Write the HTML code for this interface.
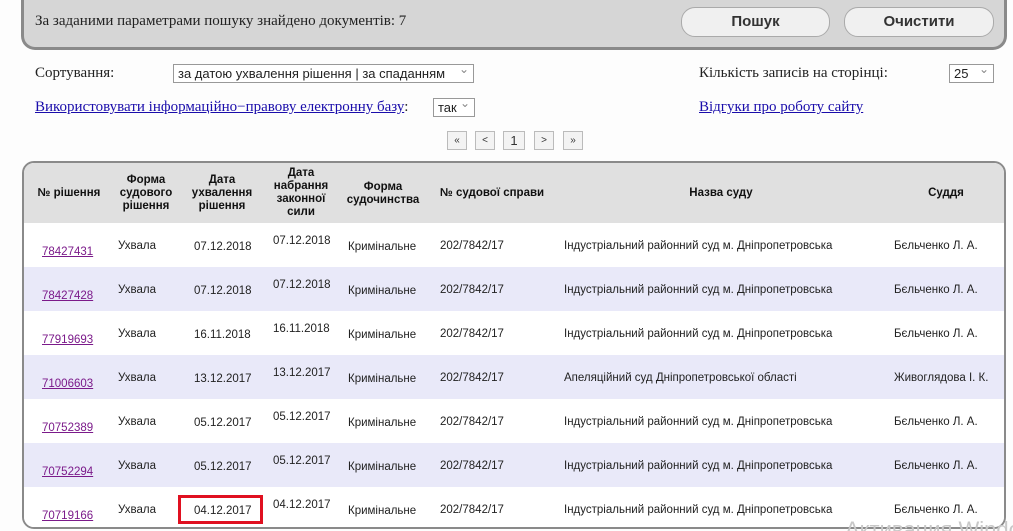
<!DOCTYPE html>
<html><head><meta charset="utf-8"><style>
html,body{margin:0;width:1013px;height:531px;overflow:hidden}
body{background:#fdfdfd;position:relative;font-family:"Liberation Serif",serif;}
.a{position:absolute;white-space:nowrap}
.top{position:absolute;left:21px;top:-10px;width:980px;height:57px;background:#d6d6d6;border:3px solid #8a8a8a;border-top:none;border-radius:0 0 14px 14px;}
.btn{position:absolute;top:7px;height:28px;border:1px solid #aaa;border-radius:14px;background:#f0f0f0;font:bold 15px "Liberation Sans",sans-serif;color:#333;text-align:center;line-height:28px}
.sel{position:absolute;border:1px solid #999;background:#fff;font:13px "Liberation Sans",sans-serif;color:#222;height:17px;line-height:17px;padding-left:4px;box-sizing:content-box}
.sel:after{content:"⌄";position:absolute;right:4px;top:-4px;color:#888;font-size:12px}
.lk{color:#1a0dab;text-decoration:underline}
.pg{position:absolute;top:131px;height:17px;border:1px solid #bbb;background:#f3f3f3;font:10px "Liberation Sans",sans-serif;text-align:center;line-height:17px;color:#333}
.tbl{position:absolute;left:22px;top:161px;width:980px;height:364px;border:2px solid #8a8a8a;border-radius:12px;overflow:hidden;background:#fff}
.row{position:absolute;left:0;width:980px;height:44px}
.t{position:absolute;font:11.5px "Liberation Sans","DejaVu Sans",sans-serif;color:#222;white-space:nowrap}
.h{font-weight:bold;text-align:center;line-height:13px;color:#111}
.lnk{color:#7b1a8a;text-decoration:underline}
</style></head><body>
<div class="top"></div>
<div class="a" style="left:35px;top:13px;font-size:15px;color:#222">За заданими параметрами пошуку знайдено документів: 7</div>
<div class="btn" style="left:681px;width:147px">Пошук</div>
<div class="btn" style="left:844px;width:148px">Очистити</div>

<div class="a" style="left:35px;top:65px;font-size:15px;color:#222">Сортування:</div>
<div class="sel" style="left:173px;top:64px;width:295px">за датою ухвалення рішення | за спаданням</div>
<div class="a" style="left:35px;top:99px;font-size:15px"><span class="lk">Використовувати інформаційно−правову електронну базу</span><span style="color:#222">:</span></div>
<div class="sel" style="left:433px;top:98px;width:36px">так</div>
<div class="a" style="left:699px;top:65px;font-size:15px;color:#222">Кількість записів на сторінці:</div>
<div class="sel" style="left:949px;top:64px;width:39px">25</div>
<div class="a lk" style="left:699px;top:99px;font-size:15px">Відгуки про роботу сайту</div>

<div class="pg" style="left:447px;width:18px">«</div>
<div class="pg" style="left:475px;width:18px">&lt;</div>
<div class="pg" style="left:503px;width:20px;font-size:13px">1</div>
<div class="pg" style="left:534px;width:18px">&gt;</div>
<div class="pg" style="left:563px;width:18px">»</div>

<div class="tbl">
<div class="row" style="top:0;height:60px;background:#e0e0e0"></div>
<div class="t h" style="left:2px;width:86px;top:24px">№ рішення</div>
<div class="t h" style="left:88px;width:68px;top:11px">Форма<br>судового<br>рішення</div>
<div class="t h" style="left:156px;width:84px;top:11px">Дата<br>ухвалення<br>рішення</div>
<div class="t h" style="left:240px;width:74px;top:4px">Дата<br>набрання<br>законної<br>сили</div>
<div class="t h" style="left:314px;width:90px;top:18px">Форма<br>судочинства</div>
<div class="t h" style="left:416px;top:24px">№ судової справи</div>
<div class="t h" style="left:542px;width:310px;top:24px">Назва суду</div>
<div class="t h" style="left:872px;width:100px;top:24px">Суддя</div>

<div class="row" style="top:60px;background:#fff"></div>
<div class="row" style="top:104px;background:#e9e9f9"></div>
<div class="row" style="top:148px;background:#fff"></div>
<div class="row" style="top:192px;background:#e9e9f9"></div>
<div class="row" style="top:236px;background:#fff"></div>
<div class="row" style="top:280px;background:#e9e9f9"></div>
<div class="row" style="top:324px;background:#fff"></div>
</div>

<div id="rows"></div>
<script>
var d=[["78427431","07.12.2018","07.12.2018","Індустріальний районний суд м. Дніпропетровська","Бєльченко Л. А."],
["78427428","07.12.2018","07.12.2018","Індустріальний районний суд м. Дніпропетровська","Бєльченко Л. А."],
["77919693","16.11.2018","16.11.2018","Індустріальний районний суд м. Дніпропетровська","Бєльченко Л. А."],
["71006603","13.12.2017","13.12.2017","Апеляційний суд Дніпропетровської області","Живоглядова І. К."],
["70752389","05.12.2017","05.12.2017","Індустріальний районний суд м. Дніпропетровська","Бєльченко Л. А."],
["70752294","05.12.2017","05.12.2017","Індустріальний районний суд м. Дніпропетровська","Бєльченко Л. А."],
["70719166","04.12.2017","04.12.2017","Індустріальний районний суд м. Дніпропетровська","Бєльченко Л. А."]];
var h="";
d.forEach(function(r,i){var y=240+i*44;
h+='<div class="t lnk" style="left:42px;top:'+(y+6)+'px">'+r[0]+'</div>'+
'<div class="t" style="left:118px;top:'+y+'px">Ухвала</div>'+
'<div class="t" style="left:194px;top:'+(y+1)+'px">'+r[1]+'</div>'+
'<div class="t" style="left:273px;top:'+(y-5)+'px">'+r[2]+'</div>'+
'<div class="t" style="left:348px;top:'+(y+1)+'px">Кримінальне</div>'+
'<div class="t" style="left:440px;top:'+y+'px">202/7842/17</div>'+
'<div class="t" style="left:564px;top:'+y+'px">'+r[3]+'</div>'+
'<div class="t" style="left:894px;top:'+y+'px">'+r[4]+'</div>';});
document.getElementById("rows").innerHTML=h;
</script>
<div class="a" style="left:178px;top:495px;width:79px;height:23px;border:3px solid #e01020"></div>
<div class="a" style="left:845px;top:517px;font:22px 'Liberation Sans',sans-serif;color:#c8c8c8">Активация Windows</div>
</body></html>
